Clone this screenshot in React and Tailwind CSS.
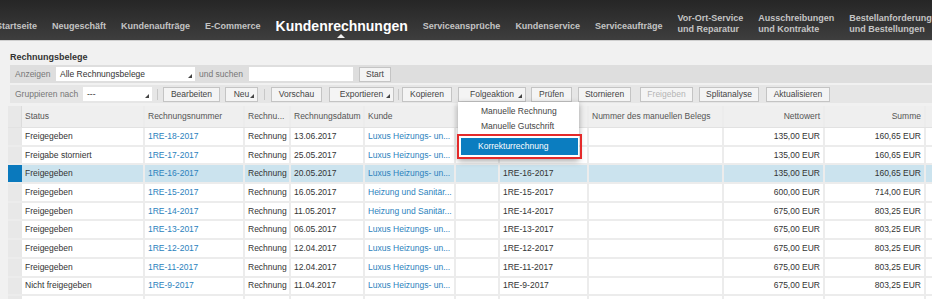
import React from "react";

const navItems = [
  { label: "Startseite" },
  { label: "Neugeschäft" },
  { label: "Kundenaufträge" },
  { label: "E-Commerce" },
  { label: "Kundenrechnungen", active: true },
  { label: "Serviceansprüche" },
  { label: "Kundenservice" },
  { label: "Serviceaufträge" },
  { label: "Vor-Ort-Service", sub: "und Reparatur" },
  { label: "Ausschreibungen", sub: "und Kontrakte" },
  { label: "Bestellanforderungen", sub: "und Bestellungen" },
];

const rows = [
  ["Freigegeben", "1RE-18-2017", "13.06.2017", "Luxus Heizungs- un...", "", "135,00 EUR", "160,65 EUR"],
  ["Freigabe storniert", "1RE-17-2017", "25.05.2017", "Luxus Heizungs- un...", "", "135,00 EUR", "160,65 EUR"],
  ["Freigegeben", "1RE-16-2017", "20.05.2017", "Luxus Heizungs- un...", "1RE-16-2017", "135,00 EUR", "160,65 EUR", true],
  ["Freigegeben", "1RE-15-2017", "16.05.2017", "Heizung und Sanitär...", "1RE-15-2017", "600,00 EUR", "714,00 EUR"],
  ["Freigegeben", "1RE-14-2017", "11.05.2017", "Heizung und Sanitär...", "1RE-14-2017", "675,00 EUR", "803,25 EUR"],
  ["Freigegeben", "1RE-13-2017", "06.05.2017", "Luxus Heizungs- un...", "1RE-13-2017", "675,00 EUR", "803,25 EUR"],
  ["Freigegeben", "1RE-12-2017", "12.04.2017", "Luxus Heizungs- un...", "1RE-12-2017", "675,00 EUR", "803,25 EUR"],
  ["Freigegeben", "1RE-11-2017", "12.04.2017", "Luxus Heizungs- un...", "1RE-11-2017", "675,00 EUR", "803,25 EUR"],
  ["Nicht freigegeben", "1RE-9-2017", "11.04.2017", "Luxus Heizungs- un...", "1RE-9-2017", "675,00 EUR", "803,25 EUR"],
  ["", "", "", "", "", "", ""],
];

// small corner triangle used on dropdown fields and menu buttons
const Corner = () => (
  <svg width="4" height="4" viewBox="0 0 4 4" className="absolute right-[3px] bottom-[3px]">
    <path d="M4 0 L4 4 L0 4 Z" fill="#444" />
  </svg>
);

const Btn = ({ w, children, menu, disabled }) => (
  <div
    className={`relative h-[15px] flex items-center justify-center border border-[#c4c4c4] bg-[#f4f4f4] ${w} ${
      disabled ? "text-[#b5b5b5]" : "text-[#444]"
    }`}
  >
    {children}
    {menu && <Corner />}
  </div>
);

const Sep = () => <div className="w-px h-[11px] bg-[#c8c8c8] mx-[3px]" />;

const Cell = ({ w, children, className = "" }) => (
  <div className={`h-full flex items-center border-r-2 border-[#ececec] px-[3px] whitespace-nowrap overflow-hidden ${w} ${className}`}>
    {children}
  </div>
);

const App = () => {
  return (
    <div
      className="w-[932px] h-[299px] overflow-hidden bg-[#f1f1f1] text-[8.5px] text-[#333]"
      style={{ fontFamily: '"Liberation Sans", Arial, sans-serif' }}
    >
      {/* top navigation */}
      <div className="relative h-[41px] bg-gradient-to-b from-[#262626] to-[#3e3e3e] border-b border-[#cfcfcf] flex items-center gap-[15px] -ml-[4px] pt-[12px]">
        {navItems.map((item) =>
          item.active ? (
            <div key={item.label} className="relative text-[14px] font-bold text-white leading-none">
              {item.label}
              <div className="absolute left-[61px] top-[15px] w-0 h-0 border-l-[4px] border-r-[4px] border-b-[4px] border-l-transparent border-r-transparent border-b-[#f1f1f1]" />
            </div>
          ) : (
            <div key={item.label} className="text-[9px] font-bold text-[#c4c4c4] leading-[11px] whitespace-nowrap">
              {item.sub ? (
                <div className="-mt-[5px]">
                  <div>{item.label}</div>
                  <div>{item.sub}</div>
                </div>
              ) : (
                item.label
              )}
            </div>
          )
        )}
      </div>

      {/* page title */}
      <div className="pl-[10px] pt-[10px] h-[24px] text-[9px] font-bold text-[#333]">Rechnungsbelege</div>

      {/* toolbar 1 */}
      <div className="ml-[10px] h-[18px] bg-[#dedede] flex items-center text-[#777]">
        <span className="ml-[5px] w-[41px]">Anzeigen</span>
        <div className="relative h-[14px] w-[139px] bg-white flex items-center pl-[4px] text-[#333]">
          Alle Rechnungsbelege
          <Corner />
        </div>
        <span className="ml-[4px] w-[50px]">und suchen</span>
        <div className="h-[14px] w-[104px] bg-white" />
        <div className="ml-[6px] h-[15px] w-[32px] border border-[#c4c4c4] bg-[#f4f4f4] flex items-center justify-center text-[#444]">
          Start
        </div>
      </div>

      {/* toolbar 2 */}
      <div className="relative ml-[10px] mt-[2px] h-[18px] bg-[#e6e6e6] flex items-center text-[#777]">
        <span className="ml-[5px] w-[68px]">Gruppieren nach</span>
        <div className="relative h-[14px] w-[69px] bg-white flex items-center pl-[4px] text-[#333]">
          ---
          <Corner />
        </div>
        <div className="w-[11px] flex justify-center"><Sep /></div>
        <Btn w="w-[57px]">Bearbeiten</Btn>
        <div className="w-[5px]" />
        <Btn w="w-[33px]" menu>Neu</Btn>
        <div className="w-[13px] flex justify-center"><Sep /></div>
        <Btn w="w-[51px]">Vorschau</Btn>
        <div className="w-[7px]" />
        <Btn w="w-[65px]" menu>Exportieren</Btn>
        <div className="w-[8px] flex justify-center"><Sep /></div>
        <Btn w="w-[50px]">Kopieren</Btn>
        <div className="w-[6px]" />
        <Btn w="w-[68px]" menu>Folgeaktion</Btn>
        <div className="w-[5px] flex justify-center"><Sep /></div>
        <Btn w="w-[41px]">Prüfen</Btn>
        <div className="w-[6px]" />
        <Btn w="w-[53px]">Stornieren</Btn>
        <div className="w-[9px]" />
        <Btn w="w-[53px]" disabled>Freigeben</Btn>
        <div className="w-[6px]" />
        <Btn w="w-[60px]">Splitanalyse</Btn>
        <div className="w-[7px]" />
        <Btn w="w-[64px]">Aktualisieren</Btn>

        {/* Folgeaktion dropdown */}
        <div className="absolute left-[448px] top-[17px] z-10 w-[121px] h-[57px] bg-white shadow-[0_2px_6px_rgba(0,0,0,0.35)] text-[#444]">
          <div className="h-[16px] flex items-center pl-[23px] pt-[2px]">Manuelle Rechnung</div>
          <div className="h-[16px] flex items-center pl-[23px] pt-[1px]">Manuelle Gutschrift</div>
          <div className="relative -ml-px w-[125px] h-[25px] border-2 border-[#e42a2a] p-[2px]">
            <div className="h-full bg-[#0b7dc0] text-white flex items-center pl-[17px]">Korrekturrechnung</div>
          </div>
        </div>
      </div>

      {/* table */}
      <div className="ml-[8px] mt-[3px]">
        <div className="h-[22px] flex bg-[#efefef] text-[#555] border-b border-[#e2e2e2]">
          <div className="w-[14px] bg-[#e8e8e8] border-r border-[#dcdcdc]" />
          <Cell w="w-[123px]" className="border-[#e2e2e2]">Status</Cell>
          <Cell w="w-[100px]" className="border-[#e2e2e2]">Rechnungsnummer</Cell>
          <Cell w="w-[46px]" className="border-[#e2e2e2]">Rechnu...</Cell>
          <Cell w="w-[74px]" className="border-[#e2e2e2]">Rechnungsdatum</Cell>
          <Cell w="w-[91px]" className="border-[#e2e2e2]">Kunde</Cell>
          <Cell w="w-[44px]" className="border-[#e2e2e2]"></Cell>
          <Cell w="w-[89px]" className="border-[#e2e2e2]"></Cell>
          <Cell w="w-[135px]" className="border-[#e2e2e2]">Nummer des manuellen Belegs</Cell>
          <Cell w="w-[101px]" className="border-[#e2e2e2] justify-end">Nettowert</Cell>
          <Cell w="w-[101px]" className="border-[#dcdcdc] justify-end">Summe</Cell>
        </div>

        {rows.map((r, i) => {
          const sel = r[7];
          return (
            <div
              key={i}
              className={`h-[18.7px] flex border-b-2 border-[#ececec] ${sel ? "bg-[#cbe3ee]" : "bg-white"}`}
            >
              <div className={`w-[14px] ${sel ? "bg-[#0a79bd]" : "bg-[#e8e8e8]"}`} />
              <Cell w="w-[123px]">{r[0]}</Cell>
              <Cell w="w-[100px]" className="text-[#2b82bd]">{r[1]}</Cell>
              <Cell w="w-[46px]">{r[0] ? "Rechnung" : ""}</Cell>
              <Cell w="w-[74px]">{r[2]}</Cell>
              <Cell w="w-[91px]" className="text-[#2b82bd]">{r[3]}</Cell>
              <Cell w="w-[44px]"></Cell>
              <Cell w="w-[89px]">{r[4]}</Cell>
              <Cell w="w-[135px]"></Cell>
              <Cell w="w-[101px]" className="justify-end">{r[5]}</Cell>
              <Cell w="w-[101px]" className="justify-end">{r[6]}</Cell>
            </div>
          );
        })}
      </div>
    </div>
  );
};

export default App;
